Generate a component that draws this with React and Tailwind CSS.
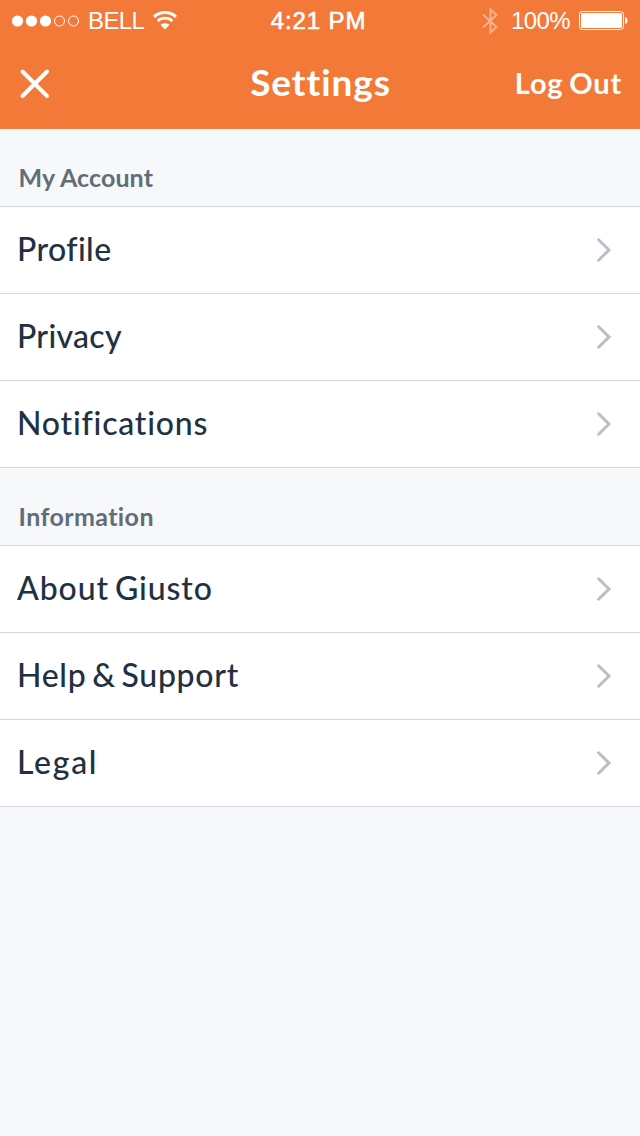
function SignalDots() {
  return (
    <svg width="68" height="12" viewBox="0 0 68 12" fill="none" className="block">
      <circle cx="5.5" cy="6" r="5.6" fill="white" />
      <circle cx="19.5" cy="6" r="5.6" fill="white" />
      <circle cx="33.5" cy="6" r="5.6" fill="white" />
      <circle cx="47.5" cy="6" r="5" stroke="white" />
      <circle cx="61.5" cy="6" r="5" stroke="white" />
    </svg>
  );
}

function WifiIcon() {
  return (
    <svg width="24" height="19" viewBox="0 0 24 19" fill="none" className="block">
      <path d="M1 5.8C7.2 0.2 16.8 0.2 23 5.8" stroke="white" strokeWidth="3" />
      <path d="M4.6 10C8.8 6.2 15.2 6.2 19.4 10" stroke="white" strokeWidth="2.8" />
      <path d="M12 18.4L7.6 13.8C10 11.8 14 11.8 16.4 13.8Z" fill="white" />
    </svg>
  );
}

function BluetoothIcon() {
  return (
    <svg width="16" height="28" viewBox="0 0 16 28" fill="none" className="block">
      <path d="M1 7.5L14.5 20L8.5 25.5V2.5L14.5 8L1 20.5" stroke="white" strokeOpacity="0.42" strokeWidth="2" />
    </svg>
  );
}

function BatteryIcon() {
  return (
    <svg width="50" height="20" viewBox="0 0 50 20" fill="none" className="block">
      <rect x="0.5" y="0.5" width="44" height="18" rx="3" stroke="white" />
      <rect x="2" y="2" width="41" height="15" rx="1.8" fill="white" />
      <path d="M46 6C49.5 7 49.5 12 46 13Z" fill="white" />
    </svg>
  );
}

function StatusBar() {
  return (
    <div className="grid h-[41px] grid-cols-3 items-center pt-px font-['Liberation_Sans',Arial,sans-serif] text-[24px] leading-[40px] text-white">
      <div className="flex items-center pl-[12px]">
        <SignalDots />
        <span className="ml-[8px] tracking-[-0.6px]">BELL</span>
        <span className="ml-[9px] pb-[2px]"><WifiIcon /></span>
      </div>
      <div className="pr-[3px] text-center tracking-[0.9px] whitespace-nowrap [-webkit-text-stroke:0.6px_white]">4:21 PM</div>
      <div className="flex items-center justify-end pr-[11px]">
        <BluetoothIcon />
        <span className="mr-[9px] ml-[13px] tracking-[-0.6px]">100%</span>
        <BatteryIcon />
      </div>
    </div>
  );
}

function NavBar() {
  return (
    <div className="grid h-[88px] grid-cols-[1fr_auto_1fr] items-center pr-[18px] pb-[2px] pl-[19px] text-white">
      <button className="justify-self-start pb-[2px]" aria-label="Close">
        <svg width="31" height="31" viewBox="0 0 31 31" fill="none" className="block">
          <path d="M3.5 3.5L28 28M28 3.5L3.5 28" stroke="white" strokeWidth="4" strokeLinecap="round" />
        </svg>
      </button>
      <h1 className="pb-[4px] text-[37px] leading-[44px] font-bold tracking-[0.9px]">Settings</h1>
      <button className="justify-self-end pb-[2px] text-[29px] leading-[36px] font-bold tracking-[0.8px] [word-spacing:-2px]">Log Out</button>
    </div>
  );
}

function Row({ label, spacing }) {
  return (
    <li className="flex h-[87px] items-center justify-between border-b border-[#d3d8e0] bg-white pr-[28.5px] pl-[17px]">
      <span className={`pb-[2px] text-[32px] leading-[40px] font-medium text-[#213142] ${spacing}`}>{label}</span>
      <svg width="16" height="26" viewBox="0 0 16 26" fill="none" className="block">
        <path d="M2.6 2.8L13 13L2.6 23.2" stroke="#b9bfc6" strokeWidth="3" strokeLinecap="round" />
      </svg>
    </li>
  );
}

function Section({ title, rows, heading }) {
  return (
    <section>
      <h2 className={`h-[78px] border-b border-[#d3d8e0] pt-[32px] pl-[18.5px] text-[25px] leading-[32px] font-bold text-[#626d78] ${heading}`}>{title}</h2>
      <ul>
        {rows.map((row) => (
          <Row key={row.label} {...row} />
        ))}
      </ul>
    </section>
  );
}

const account = [
  { label: "Profile", spacing: "tracking-[0.4px]" },
  { label: "Privacy", spacing: "tracking-[0.3px]" },
  { label: "Notifications", spacing: "tracking-[0.8px]" },
];

const information = [
  { label: "About Giusto", spacing: "tracking-[0.9px] [word-spacing:-3px]" },
  { label: "Help & Support", spacing: "tracking-[0.7px] [word-spacing:-3px]" },
  { label: "Legal", spacing: "tracking-[1.7px]" },
];

export default function App() {
  return (
    <div className="min-h-[1136px] w-[640px] bg-[#f6f8fa] font-['Lato','Noto_Sans',sans-serif]">
      <header className="bg-[#f37938]">
        <StatusBar />
        <NavBar />
      </header>
      <main>
        <Section title="My Account" rows={account} heading="tracking-[0.1px]" />
        <Section title="Information" rows={information} heading="tracking-[0.4px]" />
      </main>
    </div>
  );
}
